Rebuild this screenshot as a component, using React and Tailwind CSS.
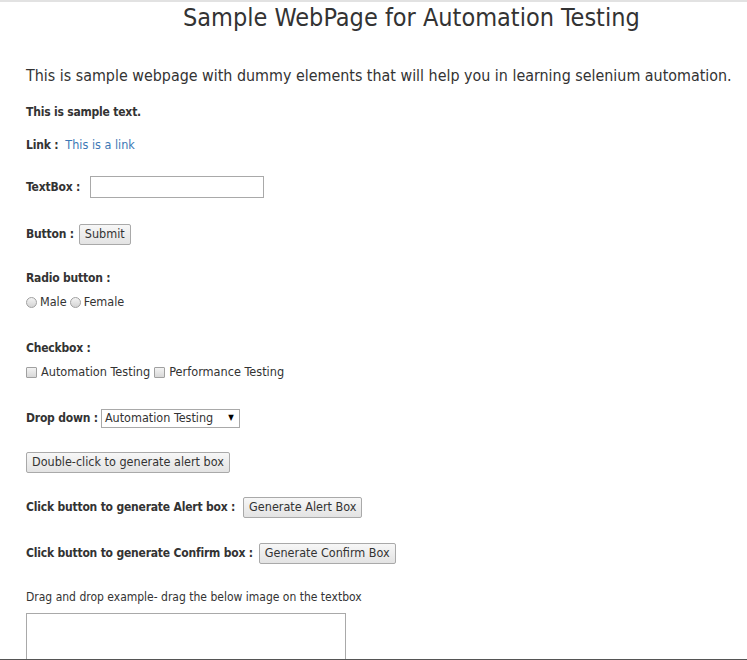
import { useState } from 'react';

const font = { fontFamily: '"Comic Sans MS", "DejaVu Sans Condensed", "Open Sans", sans-serif' };

function Btn({ children }) {
    return (
        <button
            type="button"
            className="h-[21px] px-[5px] border border-[#a9a9a9] rounded-[2px] bg-gradient-to-b from-[#f7f7f7] to-[#e3e3e3] text-[12.5px] text-[#333] leading-none"
        >
            {children}
        </button>
    );
}

function Radio() {
    return <span className="inline-block w-[11px] h-[11px] rounded-full border border-[#a0a0a0] bg-gradient-to-b from-[#f3f3f3] to-[#d4d4d4]" />;
}

function Check() {
    return <span className="inline-block w-[11px] h-[11px] rounded-[1px] border border-[#a0a0a0] bg-gradient-to-b from-[#f3f3f3] to-[#d8d8d8]" />;
}

function Label({ children, className = '' }) {
    return <b className={'tracking-[-0.2px] ' + className}>{children}</b>;
}

export default function App() {
    const [text, setText] = useState('');

    return (
        <div style={font} className="h-[660px] overflow-hidden bg-white text-[#333] border-t-2 border-t-[#e2e2e2] border-b border-b-[#555]">
            <div className="h-[31px] flex items-center pl-[183px] text-[25px] leading-none whitespace-nowrap">
                Sample WebPage for Automation Testing
            </div>

            <div className="px-[26px]">
                <div className="mt-[31px] h-[24px] flex items-center text-[15.9px] whitespace-nowrap">
                    This is sample webpage with dummy elements that will help you in learning selenium automation.
                </div>

                <div className="mt-[12px] h-[24px] flex items-center text-[12px]">
                    <Label>This is sample text.</Label>
                </div>

                <div className="mt-[9px] h-[24px] flex items-center text-[12px]">
                    <Label>Link :</Label>
                    <a href="#" className="ml-[7px] text-[12.5px] text-[#3c78b5]">This is a link</a>
                </div>

                <div className="mt-[18px] h-[24px] flex items-center text-[12px]">
                    <Label>TextBox :</Label>
                    <input
                        value={text}
                        onChange={(e) => setText(e.target.value)}
                        className="ml-[10px] w-[174px] h-[22px] border border-[#a9a9a9] outline-none px-1"
                    />
                </div>

                <div className="mt-[23px] h-[24px] flex items-center text-[12px]">
                    <Label className="mr-[5px]">Button :</Label>
                    <Btn>Submit</Btn>
                </div>

                <div className="mt-[20px] h-[24px] flex items-center text-[12px]">
                    <Label>Radio button :</Label>
                </div>
                <div className="h-[24px] flex items-center gap-[3px] text-[12.5px]">
                    <Radio /> <span>Male</span> <Radio /> <span>Female</span>
                </div>

                <div className="mt-[22px] h-[24px] flex items-center text-[12px]">
                    <Label>Checkbox :</Label>
                </div>
                <div className="h-[24px] flex items-center gap-[4px] text-[12.6px]">
                    <Check /> <span>Automation Testing</span> <Check /> <span>Performance Testing</span>
                </div>

                <div className="mt-[22px] h-[24px] flex items-center text-[12px]">
                    <Label className="mr-[3px]">Drop down :</Label>
                    <div className="w-[139px] h-[19px] border border-[#a9a9a9] bg-white flex items-center justify-between pl-[3px] pr-[5px] text-[12.5px]">
                        <span>Automation Testing</span>
                        <span className="text-[8px] text-black">▼</span>
                    </div>
                </div>

                <div className="mt-[20px] h-[24px] flex items-center text-[12px]">
                    <Btn>Double-click to generate alert box</Btn>
                </div>

                <div className="mt-[21px] h-[24px] flex items-center text-[12px]">
                    <Label className="mr-[8px]">Click button to generate Alert box :</Label>
                    <Btn>Generate Alert Box</Btn>
                </div>

                <div className="mt-[22px] h-[24px] flex items-center text-[12px]">
                    <Label className="mr-[6px]">Click button to generate Confirm box :</Label>
                    <Btn>Generate Confirm Box</Btn>
                </div>

                <div className="mt-[20px] h-[24px] flex items-center text-[12px]">
                    Drag and drop example- drag the below image on the textbox
                </div>

                <div className="mt-[4px] w-[320px] h-[80px] border border-[#a9a9a9]" />
            </div>
        </div>
    );
}
